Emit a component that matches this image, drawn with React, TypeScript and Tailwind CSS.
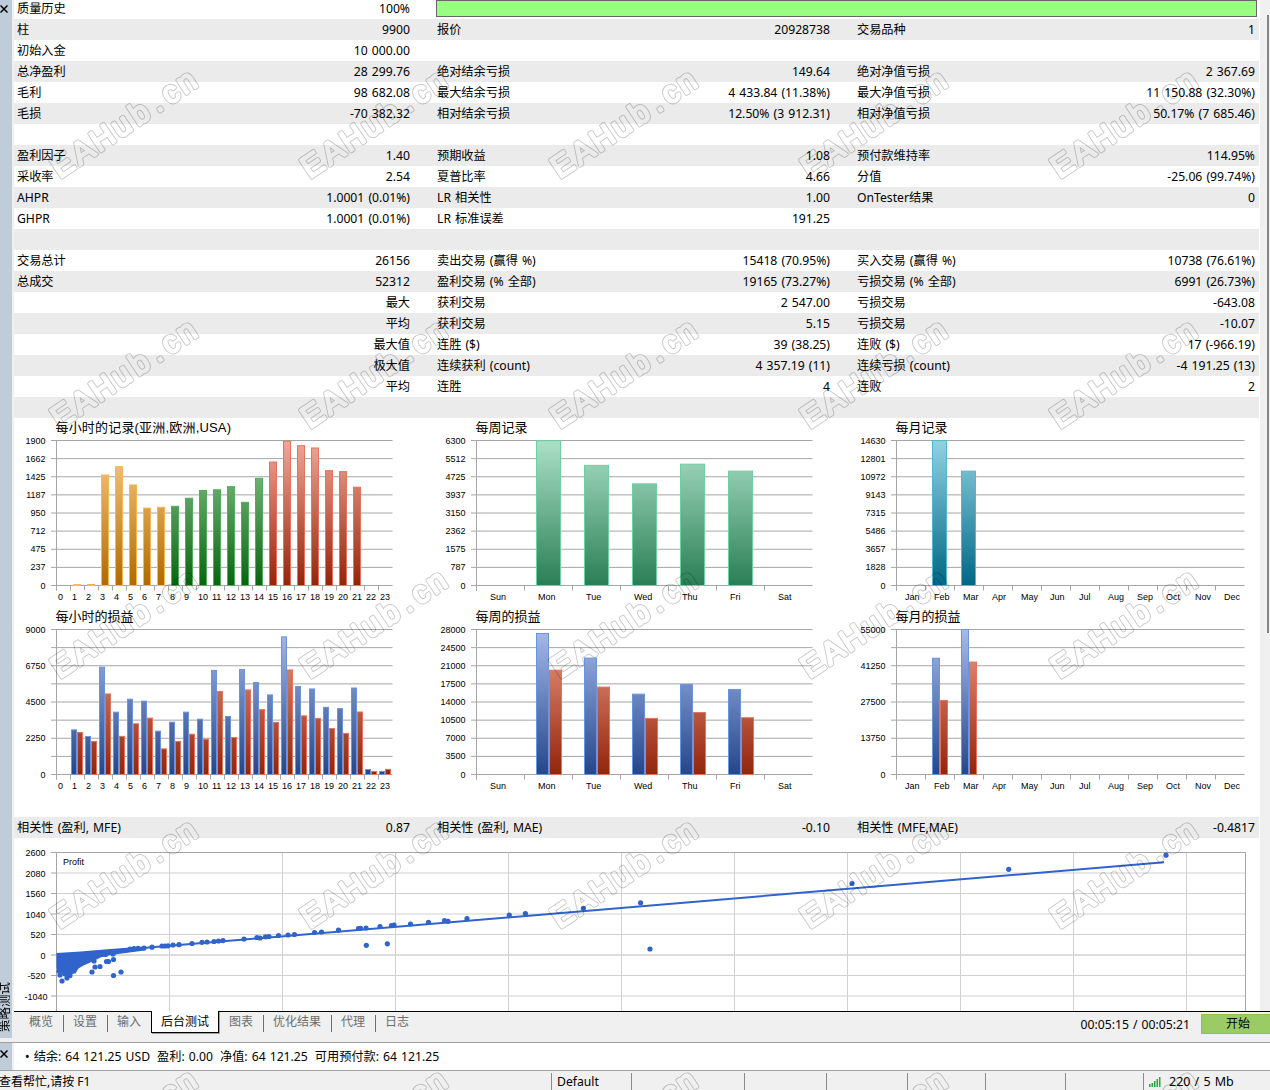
import { clsx } from "clsx";

type Cell = [label: string, value: string];

const ROWS: Cell[][] = [
  [["柱", "9900"], ["报价", "20928738"], ["交易品种", "1"]],
  [["初始入金", "10 000.00"], ["", ""], ["", ""]],
  [["总净盈利", "28 299.76"], ["绝对结余亏损", "149.64"], ["绝对净值亏损", "2 367.69"]],
  [["毛利", "98 682.08"], ["最大结余亏损", "4 433.84 (11.38%)"], ["最大净值亏损", "11 150.88 (32.30%)"]],
  [["毛损", "-70 382.32"], ["相对结余亏损", "12.50% (3 912.31)"], ["相对净值亏损", "50.17% (7 685.46)"]],
  [],
  [["盈利因子", "1.40"], ["预期收益", "1.08"], ["预付款维持率", "114.95%"]],
  [["采收率", "2.54"], ["夏普比率", "4.66"], ["分值", "-25.06 (99.74%)"]],
  [["AHPR", "1.0001 (0.01%)"], ["LR 相关性", "1.00"], ["OnTester结果", "0"]],
  [["GHPR", "1.0001 (0.01%)"], ["LR 标准误差", "191.25"], ["", ""]],
  [],
  [["交易总计", "26156"], ["卖出交易 (赢得 %)", "15418 (70.95%)"], ["买入交易 (赢得 %)", "10738 (76.61%)"]],
  [["总成交", "52312"], ["盈利交易 (% 全部)", "19165 (73.27%)"], ["亏损交易 (% 全部)", "6991 (26.73%)"]],
  [["", "最大"], ["获利交易", "2 547.00"], ["亏损交易", "-643.08"]],
  [["", "平均"], ["获利交易", "5.15"], ["亏损交易", "-10.07"]],
  [["", "最大值"], ["连胜 ($)", "39 (38.25)"], ["连败 ($)", "17 (-966.19)"]],
  [["", "极大值"], ["连续获利 (count)", "4 357.19 (11)"], ["连续亏损 (count)", "-4 191.25 (13)"]],
  [["", "平均"], ["连胜", "4"], ["连败", "2"]],
  [],
];

const CORRELATION: Cell[] = [
  ["相关性 (盈利, MFE)", "0.87"],
  ["相关性 (盈利, MAE)", "-0.10"],
  ["相关性 (MFE,MAE)", "-0.4817"],
];

const GRADIENTS = {
  asia: { from: "#fbd08a", to: "#b06a00", stroke: "#fbb450" },
  europe: { from: "#93c995", to: "#08650f", stroke: "#4fae5c" },
  usa: { from: "#f0a898", to: "#93240a", stroke: "#e5735a" },
  week: { from: "#abe0c7", to: "#2a7f55", stroke: "#6fcf9f" },
  month: { from: "#92d2e2", to: "#006786", stroke: "#4cb8d2" },
  profit: { from: "#a6bae8", to: "#24468c", stroke: "#6c93dd" },
  loss: { from: "#ee9c8a", to: "#93240a", stroke: "#e5735a" },
};

type Tone = keyof typeof GRADIENTS;

interface Series {
  tone: (i: number) => Tone;
  values: number[];
}

interface ChartProps {
  title: string;
  titleLength?: number;
  max: number;
  yLabels: string[];
  xLabels: string[];
  labelOffset: number;
  step: number;
  plotWidth: number;
  barOffset: number;
  barWidth: number;
  series: Series[];
}

const HOURS = Array.from({ length: 24 }, (_, i) => String(i));
const DAYS = ["Sun", "Mon", "Tue", "Wed", "Thu", "Fri", "Sat"];
const MONTHS = ["Jan", "Feb", "Mar", "Apr", "May", "Jun", "Jul", "Aug", "Sep", "Oct", "Nov", "Dec"];

const hourLayout = { xLabels: HOURS, labelOffset: 1.5, step: 14, plotWidth: 336 };
const dayLayout = { xLabels: DAYS, labelOffset: 13.5, step: 48, plotWidth: 336 };
const monthLayout = { xLabels: MONTHS, labelOffset: 8.5, step: 29, plotWidth: 348 };

const CHARTS: ChartProps[] = [
  {
    ...hourLayout,
    title: "每小时的记录(亚洲,欧洲,USA)",
    titleLength: 175.5,
    max: 1900,
    yLabels: ["1900", "1662", "1425", "1187", "950", "712", "475", "237", "0"],
    barOffset: 3,
    barWidth: 7,
    series: [
      {
        tone: (i) => (i < 8 ? "asia" : i < 15 ? "europe" : "usa"),
        values: [
          0, 10, 14, 1448, 1557, 1317, 1015, 1025, 1038, 1143, 1246, 1254, 1295, 1090, 1405, 1618, 1890, 1832, 1802,
          1505, 1492, 1288, 0, 0,
        ],
      },
    ],
  },
  {
    ...dayLayout,
    title: "每周记录",
    max: 6300,
    yLabels: ["6300", "5512", "4725", "3937", "3150", "2362", "1575", "787", "0"],
    barOffset: 12,
    barWidth: 24,
    series: [{ tone: () => "week", values: [0, 6290, 5220, 4416, 5272, 4970, 0] }],
  },
  {
    ...monthLayout,
    title: "每月记录",
    max: 14630,
    yLabels: ["14630", "12801", "10972", "9143", "7315", "5486", "3657", "1828", "0"],
    barOffset: 7,
    barWidth: 14,
    series: [{ tone: () => "month", values: [0, 14630, 11536] }],
  },
  {
    ...hourLayout,
    title: "每小时的损益",
    max: 9000,
    yLabels: ["9000", "", "6750", "", "4500", "", "2250", "", "0"],
    barOffset: 1,
    barWidth: 5,
    series: [
      {
        tone: () => "profit",
        values: [
          0, 2770, 2360, 6662, 3869, 4676, 4552, 2690, 3248, 3869, 3434, 6460, 3600, 6520, 5710, 4940, 8540, 5460,
          5310, 4170, 4090, 5370, 310, 190,
        ],
      },
      {
        tone: () => "loss",
        values: [
          0, 2610, 2050, 5000, 2370, 3150, 3500, 1590, 2050, 2500, 2190, 5150, 2300, 5250, 4030, 3230, 6490, 3640,
          3480, 2850, 2550, 3880, 190, 320,
        ],
      },
    ],
  },
  {
    ...dayLayout,
    title: "每周的损益",
    max: 28000,
    yLabels: ["28000", "24500", "21000", "17500", "14000", "10500", "7000", "3500", "0"],
    barOffset: 12,
    barWidth: 12,
    series: [
      { tone: () => "profit", values: [0, 27230, 22480, 15513, 17400, 16420, 0] },
      { tone: () => "loss", values: [0, 20140, 16880, 10840, 11980, 10960, 0] },
    ],
  },
  {
    ...monthLayout,
    title: "每月的损益",
    max: 55000,
    yLabels: ["55000", "", "41250", "", "27500", "", "13750", "", "0"],
    barOffset: 7,
    barWidth: 7,
    series: [
      { tone: () => "profit", values: [0, 44100, 55000] },
      { tone: () => "loss", values: [0, 28100, 42650] },
    ],
  },
];

const AXIS_X = 42.5;
const TOP = 22.5;
const PLOT_H = 145;
const BASE = TOP + PLOT_H;

function BarChart(props: ChartProps) {
  const { title, titleLength, max, yLabels, xLabels, labelOffset, step, plotWidth, barOffset, barWidth, series } = props;

  return (
    <svg className="block h-[189px] w-full" overflow="visible">
      <text x={41.5} y={14} textLength={titleLength} className="text-[13px]">
        {title}
      </text>
      {yLabels.map((label, i) => {
        const y = TOP + (i * PLOT_H) / 8;
        return (
          <g key={i}>
            <line x1={37} x2={AXIS_X + plotWidth} y1={y} y2={y} stroke="#a6a6a6" />
            <text x={31.5} y={y + 3} textAnchor="end" className="text-[9px]">
              {label}
            </text>
          </g>
        );
      })}
      <line x1={AXIS_X} x2={AXIS_X} y1={TOP} y2={BASE + 5} stroke="#a6a6a6" />
      {xLabels.map((label, i) => (
        <g key={label}>
          <line x1={AXIS_X + i * step} x2={AXIS_X + i * step} y1={BASE} y2={BASE + 5} stroke="#a6a6a6" />
          <text x={AXIS_X + i * step + labelOffset} y={181.5} className="text-[9px]">
            {label}
          </text>
        </g>
      ))}
      {series.map((s, n) =>
        s.values.map((value, i) => {
          if (!value) return null;
          const height = (value / max) * PLOT_H;
          const tone = s.tone(i);
          return (
            <rect
              key={`${n}-${i}`}
              x={AXIS_X + i * step + barOffset + n * (barWidth + 1)}
              y={BASE - height}
              width={barWidth}
              height={height}
              fill={`url(#bar-${tone})`}
              stroke={GRADIENTS[tone].stroke}
            />
          );
        }),
      )}
    </svg>
  );
}

const POINTS = [
  [62, 981], [60, 975], [67, 978], [70, 975.5], [74, 971], [92, 972], [95, 967], [100, 966.5], [94, 961],
  [106.5, 961.5], [108.5, 961.5], [113.5, 959.5], [113.5, 975.5], [121, 972], [113, 954], [105.5, 954.5],
  [95.5, 956], [89, 957.5], [83, 960], [79, 962.5], [74, 965], [70, 968], [65, 974], [59, 971], [67, 971],
  [130, 949], [134, 948.7], [138, 948.4], [144, 948], [152, 947.2], [162, 946], [165, 946], [168, 945.8],
  [173, 945], [179, 944.7], [192, 943.5], [202, 942.3], [207, 942], [214, 941.5], [218.5, 941], [223, 940.6],
  [244, 939], [257, 937.5], [260, 938], [265.5, 936.8], [269, 936.5], [278.5, 935.5], [288, 935], [294.5, 934.5],
  [314.5, 932.5], [321.5, 932], [338.5, 930.2], [358.5, 928.5], [360.5, 928.3], [366, 928], [380, 926.5],
  [391.5, 925.5], [394, 925], [410.5, 924], [366.3, 945.3], [387.3, 943.8], [428.5, 922.3], [444.5, 920.6],
  [448, 921.3], [467, 918.7], [509.3, 915], [525.4, 913.5], [583.4, 908.3], [640.6, 902.8], [650, 949],
  [852, 883.5], [1008.7, 869.3], [1166, 855.2],
];

function ScatterChart() {
  const labels = ["2600", "2080", "1560", "1040", "520", "0", "-520", "-1040"];

  return (
    <svg className="block h-[173px] w-full" viewBox="14 838 1245 173">
      {labels.map((label, i) => {
        const y = 852.5 + i * 20.5;
        return (
          <g key={label}>
            <line x1={56} x2={1245} y1={y} y2={y} stroke="#d0d0d0" strokeWidth={i === 5 ? 1.6 : 1} />
            <line x1={51} x2={56} y1={y} y2={y} stroke="#a6a6a6" />
            <text x={label.length > 4 ? 47.5 : 45.5} y={y + 3.5} textAnchor="end" className="text-[9px]">
              {label}
            </text>
          </g>
        );
      })}
      {Array.from({ length: 10 }, (_, i) => (
        <line key={i} x1={169.5 + i * 113} x2={169.5 + i * 113} y1={852} y2={1011} stroke="#d0d0d0" />
      ))}
      <path d="M56.5 1011V852.5H1245.5V1011" fill="none" stroke="#a6a6a6" />
      <text x={63} y={864.5} className="text-[9px]">
        Profit
      </text>
      <g fill="#3064cc">
        <path d="M56.5 953l24-1.5 30-2.5 20-1.5 14-1v4l-34 4.500-10 2.500-8 4-9 4-5 3-3 4-6 3-2 3-5-4-3-4-3-2z" />
        {POINTS.map(([x, y], i) => (
          <circle key={i} cx={x} cy={y} r={2.6} />
        ))}
      </g>
      <path d="M57 955.300L1164 862.300" stroke="#3064cc" strokeWidth={2} />
    </svg>
  );
}

function StatCells({ cells }: { cells: Cell[] }) {
  return (
    <>
      {cells.map(([label, value], i) => (
        <div key={i} className={clsx("flex justify-between pl-[3px] leading-[21px]", i < 2 ? "pr-6" : "pr-1")}>
          <span>{label}</span>
          <span>{value}</span>
        </div>
      ))}
    </>
  );
}

const COLUMNS = "grid h-[21px] grid-cols-[420px_420px_405px]";

function Report() {
  return (
    <div className="h-[1011px] w-[1245px] overflow-hidden">
      <div className="flex h-[19px]">
        <div className="flex w-[422px] justify-between pr-[26px] pl-[3px] leading-[18px]">
          <span>质量历史</span>
          <span>100%</span>
        </div>
        <div className="h-[17px] w-[821px] border border-[#666] bg-[#98ff80]" />
      </div>
      {ROWS.map((cells, i) => (
        <div key={i} className={clsx(COLUMNS, i % 2 === 0 && "bg-[#ebebeb]")}>
          <StatCells cells={cells} />
        </div>
      ))}
      <div className="grid h-[399px] grid-cols-[420px_420px_405px] content-start font-['Liberation_Sans','Noto_Sans_CJK_SC',sans-serif]">
        {CHARTS.map((chart) => (
          <BarChart key={chart.title} {...chart} />
        ))}
      </div>
      <div className={clsx(COLUMNS, "bg-[#ebebeb]")}>
        <StatCells cells={CORRELATION} />
      </div>
      <div className="font-['Liberation_Sans',sans-serif]">
        <ScatterChart />
      </div>
    </div>
  );
}

const TABS = ["概览", "设置", "输入", "后台测试", "图表", "优化结果", "代理", "日志"];
const ACTIVE_TAB = 3;

function TabBar() {
  return (
    <div className="flex h-[31px] justify-between border-t border-black bg-[#f0f0f0]">
      <div className="-mt-px flex pl-[5px] text-[12px] text-[#6d6d6d]">
        {TABS.map((tab, i) =>
          i === ACTIVE_TAB ? (
            <div
              key={tab}
              className="flex h-[22px] w-[68px] justify-center border-r border-b border-l border-black bg-white leading-[22px] text-black shadow-[1px_1px_0_#a0a0a0]"
            >
              {tab}
            </div>
          ) : (
            <div key={tab} className="relative px-[10px] leading-[22px]">
              {tab}
              {i !== 2 && i !== 7 && <span className="absolute top-1 -right-px h-[17px] w-px bg-[#6d6d6d]" />}
            </div>
          ),
        )}
      </div>
      <div className="flex items-start">
        <span className="mr-[11px] leading-[25px]">00:05:15 / 00:05:21</span>
        <button className="mt-0.5 h-5 w-[69px] border border-r-0 border-[#8bc34a] bg-[#9bcb65] pl-1 text-center text-[12px] leading-[18px]">
          开始
        </button>
      </div>
    </div>
  );
}

function CloseIcon() {
  return (
    <svg className="block h-2 w-2" viewBox="0 0 8 8" stroke="#000" strokeWidth={1.5}>
      <path d="M0.500 0.500l7 7M7.500 0.500l-7 7" />
    </svg>
  );
}

const STATUS_CELLS = [80, 113, 82, 81, 78, 80, 78];

function StatusBar() {
  return (
    <div className="flex h-[19px] items-end overflow-hidden bg-[#f0f0f0]">
      <span className="-ml-px w-[552px] text-[12px] leading-[16px] [word-spacing:0]">查看帮忙,请按 F1</span>
      {STATUS_CELLS.map((width, i) => (
        <div key={i} className="h-[17px] border-l border-[#8a8a8a] pl-[5px] leading-[18px]" style={{ width }}>
          {i === 0 && "Default"}
        </div>
      ))}
      <div className="flex h-[17px] flex-1 items-center border-l border-[#8a8a8a] pl-[5px] text-[12.5px] leading-[16px]">
        <svg className="mr-2 h-[10px] w-[12px]" viewBox="0 0 12 10" fill="#22a93a">
          <path d="M0 7h1.500v3H0zM2.500 6H4v4H2.500zM5 4h1.500v6H5zM7.500 2H9v8H7.500zM10 0h1.500v10H10z" />
        </svg>
        220 / 5 Mb
      </div>
    </div>
  );
}

const MARKS = [180, 430, 680, 930, 1180].flatMap((y) => [62, 312, 562, 812, 1062].map((x) => [x, y]));
const MARK_X = "9 33 57 79.5 101.5 121 138.5 158";

function Watermark() {
  return (
    <svg className="pointer-events-none absolute inset-0 h-full w-full font-['Liberation_Sans',sans-serif] text-[31px]">
      <defs>
        <mask id="mark-outline" maskUnits="userSpaceOnUse" x={-10} y={-40} width={200} height={60}>
          <rect x={-10} y={-40} width={200} height={60} fill="#fff" />
          <text x={MARK_X} y={-2} textAnchor="middle" stroke="#000" strokeWidth={2.2} strokeLinejoin="round">
            EAHub.cn
          </text>
        </mask>
      </defs>
      {MARKS.map(([x, y]) => (
        <g key={`${x}-${y}`} transform={`translate(${x} ${y}) rotate(-33.9)`} mask="url(#mark-outline)" opacity={0.22}>
          <text x={MARK_X} y={-2} textAnchor="middle" stroke="#000" strokeWidth={4} strokeLinejoin="round">
            EAHub.cn
          </text>
        </g>
      ))}
    </svg>
  );
}

export default function App() {
  return (
    <div className="relative flex h-[1090px] w-[1270px] flex-col overflow-hidden bg-white font-['Noto_Sans','Noto_Sans_CJK_SC',sans-serif] text-[12.2px] text-black [word-spacing:0.9px]">
      <svg className="absolute h-0 w-0">
        <defs>
          {Object.entries(GRADIENTS).map(([id, { from, to }]) => (
            <linearGradient key={id} id={`bar-${id}`} gradientUnits="userSpaceOnUse" x1={0} x2={0} y1={TOP} y2={BASE}>
              <stop stopColor={from} />
              <stop offset={1} stopColor={to} />
            </linearGradient>
          ))}
        </defs>
      </svg>

      {/* Tester panel */}
      <div className="flex h-[1042px]">
        <div className="flex w-[14px] shrink-0 bg-[#f0f0f0]">
          <div className="flex h-[1038px] w-3 flex-col justify-between overflow-hidden bg-[#bfcddb] pt-[5px] pb-[6px]">
            <CloseIcon />
            <span className="-ml-[2px] rotate-180 text-[12.5px] leading-[14px] [writing-mode:vertical-rl] [text-orientation:sideways]">
              策略测试
            </span>
          </div>
        </div>
        <div className="flex-1">
          <div className="flex">
            <Report />
            <div className="ml-px flex flex-1 justify-end bg-[#f0f0f0] pt-[15px] pr-px">
              <div className="h-[618px] w-0.5 bg-[#858585]" />
            </div>
          </div>
          <TabBar />
        </div>
      </div>

      {/* Account line */}
      <div className="flex h-[29px] border-t border-b border-[#a0a0a0]">
        <div className="w-[14px] bg-[#f0f0f0]">
          <div className="h-full w-3 bg-[#bfcddb] pt-[7px]">
            <CloseIcon />
          </div>
        </div>
        <div className="flex items-center gap-[7px] pt-px pl-[11px]">
          <span>• 结余: 64 121.25 USD</span>
          <span>盈利: 0.00</span>
          <span>净值: 64 121.25</span>
          <span>可用预付款: 64 121.25</span>
        </div>
      </div>

      <StatusBar />
      <Watermark />
    </div>
  );
}
